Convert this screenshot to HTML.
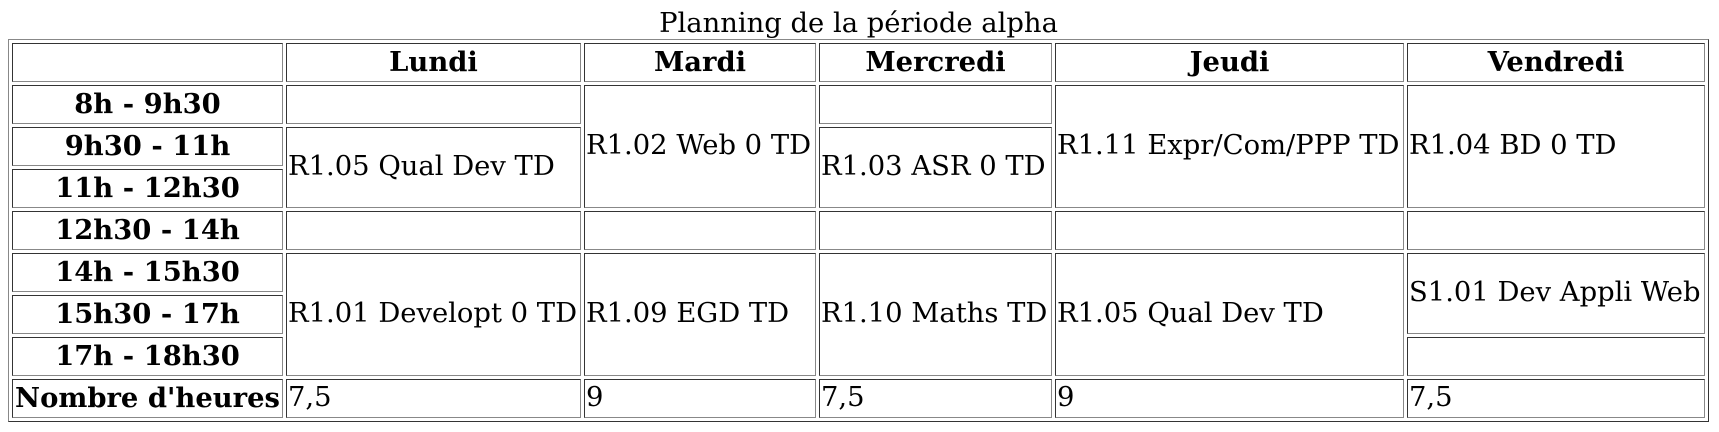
<!DOCTYPE html>
<html><head><meta charset="utf-8"><style>
html,body{margin:0;padding:0;background:#fff;}
body{padding:8px 8px 0 8px;width:1699px;}
table{width:1699px;border:1px outset #888;border-spacing:3px;table-layout:fixed;font-family:"DejaVu Serif","Liberation Serif",serif;font-size:27.4px;line-height:32.95px;color:#000;}
caption{text-align:center;line-height:31px;font-size:27.4px;}
td,th{border:1px inset #888;padding:2px 1px;vertical-align:middle;white-space:nowrap;overflow:hidden;}
td{text-align:left;}
th{text-align:center;font-weight:bold;}
</style></head><body>
<table>
<caption>Planning de la période alpha</caption>
<colgroup><col style="width:271px"><col style="width:295px"><col style="width:232px"><col style="width:233px"><col style="width:349px"><col style="width:298px"></colgroup>
<tr><th></th><th>Lundi</th><th>Mardi</th><th>Mercredi</th><th>Jeudi</th><th>Vendredi</th></tr>
<tr><th>8h - 9h30</th><td></td><td rowspan="3">R1.02 Web 0 TD</td><td></td><td rowspan="3">R1.11 Expr/Com/PPP TD</td><td rowspan="3">R1.04 BD 0 TD</td></tr>
<tr><th>9h30 - 11h</th><td rowspan="2">R1.05 Qual Dev TD</td><td rowspan="2">R1.03 ASR 0 TD</td></tr>
<tr><th>11h - 12h30</th></tr>
<tr><th>12h30 - 14h</th><td></td><td></td><td></td><td></td><td></td></tr>
<tr><th>14h - 15h30</th><td rowspan="3">R1.01 Developt 0 TD</td><td rowspan="3">R1.09 EGD TD</td><td rowspan="3">R1.10 Maths TD</td><td rowspan="3">R1.05 Qual Dev TD</td><td rowspan="2">S1.01 Dev Appli Web</td></tr>
<tr><th>15h30 - 17h</th></tr>
<tr><th>17h - 18h30</th><td></td></tr>
<tr><th>Nombre d'heures</th><td>7,5</td><td>9</td><td>7,5</td><td>9</td><td>7,5</td></tr>
</table>
</body></html>
